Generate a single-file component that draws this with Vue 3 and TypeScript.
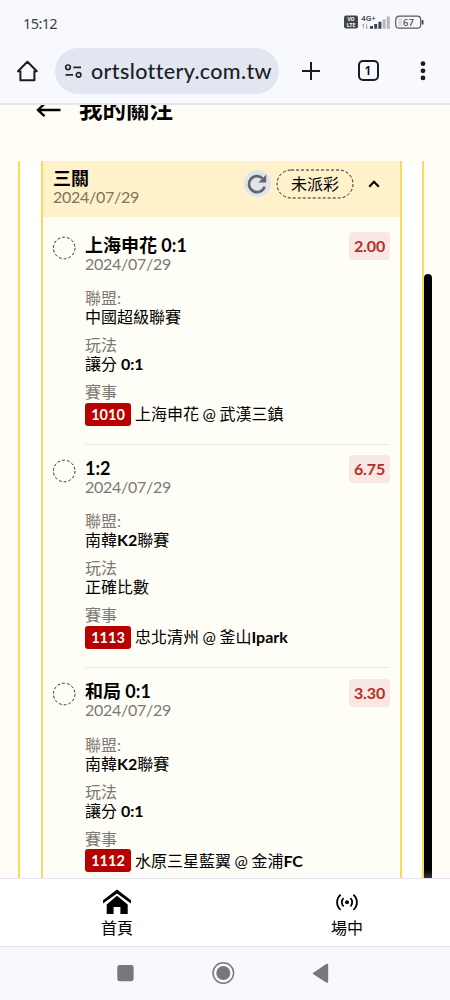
<script setup lang="ts">
interface Leg {
  pick: string
  odds: string
  date: string
  league: string
  market: string
  code: string
  match: string
}

interface Part {
  text: string
  latin: boolean
}

const legs: Leg[] = [
  { pick: '上海申花 0:1', odds: '2.00', date: '2024/07/29', league: '中國超級聯賽', market: '讓分 0:1', code: '1010', match: '上海申花 @ 武漢三鎮' },
  { pick: '1:2', odds: '6.75', date: '2024/07/29', league: '南韓K2聯賽', market: '正確比數', code: '1113', match: '忠北清州 @ 釜山Ipark' },
  { pick: '和局 0:1', odds: '3.30', date: '2024/07/29', league: '南韓K2聯賽', market: '讓分 0:1', code: '1112', match: '水原三星藍翼 @ 金浦FC' },
]

// Latin letters and digits are set heavier than the Chinese text around them.
function parts(value: string): Part[] {
  return (value.match(/[\x20-\x7e]+|[^\x20-\x7e]+/g) ?? []).map((text) => ({
    text,
    latin: /[0-9A-Za-z]/.test(text),
  }))
}
</script>

<template>
  <div class="screen">
    <header class="status">
      <span class="clock">15:12</span>
      <svg class="indicators" width="84" height="18" viewBox="0 0 84 18">
        <rect x="1" y="2.5" width="14" height="13" rx="2" fill="#43454b" />
        <text x="8" y="8.2" class="tiny" text-anchor="middle">VO</text>
        <text x="8" y="14.3" class="tiny" text-anchor="middle">LTE</text>
        <text x="18.2" y="8.2" class="gen">4G+</text>
        <path d="M20.5 15.5v-4.5l-1.5 1.5M23.5 11v4.5l1.5-1.5" fill="none" stroke="#a7a9ae" />
        <g fill="#43454b">
          <rect x="27" y="13" width="3" height="2.8" />
          <rect x="31.2" y="11" width="3" height="4.8" />
          <rect x="35.4" y="8.7" width="3" height="7.1" />
        </g>
        <g fill="#b5b7bd">
          <rect x="39.6" y="6.3" width="3" height="9.5" />
          <rect x="43.8" y="3.5" width="3" height="12.3" />
        </g>
        <rect x="52.7" y="3.2" width="25" height="12" rx="3.5" fill="none" stroke="#55575d" stroke-width="1.2" />
        <path d="M55 5h4.5v8.5h-4.5z" fill="#dfe1e6" />
        <rect x="78.7" y="7" width="1.8" height="4.5" rx=".6" fill="#43454b" />
        <text x="65.4" y="12.6" class="charge" text-anchor="middle">67</text>
      </svg>
    </header>

    <div class="toolbar">
      <svg class="home" width="22" height="22" viewBox="0 0 22 22">
        <path d="M2 11.2h2.4v9.1h14v-9.1h2.4L11.4 1.8z" fill="none" stroke="#1b1c20" stroke-width="2" stroke-linejoin="round" />
      </svg>
      <div class="address">
        <svg width="18" height="14" viewBox="0 0 18 14">
          <g fill="none" stroke="#24262d" stroke-width="1.7">
            <circle cx="4" cy="3.3" r="2.3" />
            <path d="M9.4 3.3h7.6M1.6 10.9h7.4" />
            <circle cx="14.6" cy="10.9" r="2.3" />
          </g>
        </svg>
        <span class="url">ortslottery.com.tw</span>
      </div>
      <svg class="plus" width="20" height="20" viewBox="0 0 20 20">
        <path d="M10 1v18M1 10h18" fill="none" stroke="#1b1c20" stroke-width="2" />
      </svg>
      <span class="tabs">1</span>
      <svg class="more" width="6" height="20" viewBox="0 0 6 20">
        <g fill="#1b1c20">
          <circle cx="3" cy="2.7" r="2.4" />
          <circle cx="3" cy="9.8" r="2.4" />
          <circle cx="3" cy="16.9" r="2.4" />
        </g>
      </svg>
    </div>

    <main class="page">
      <div class="heading">
        <svg width="26" height="18" viewBox="0 0 26 18">
          <path d="M24.5 9H2M8.5 2.8 2 9l6.5 6.2" fill="none" stroke="#000" stroke-width="2.4" />
        </svg>
        <h1>我的關注</h1>
      </div>

      <section class="outer">
        <article class="card">
          <div class="card-head">
            <div class="bet">
              <b>三關</b>
              <span>2024/07/29</span>
            </div>
            <span class="refresh">
              <svg width="20" height="20" viewBox="0 0 20 20">
                <path d="M17.6 12.6A8 8 0 1 1 15.6 4.4" fill="none" stroke="#60646c" stroke-width="2.6" />
                <path d="M19.2.8v7.8h-7.8z" fill="#60646c" />
              </svg>
            </span>
            <span class="state">
              <svg width="78" height="30" viewBox="0 0 78 30">
                <rect x="1" y="1" width="76" height="28" rx="14" fill="none" stroke="#222" stroke-dasharray="3 2" />
              </svg>
              <span>未派彩</span>
            </span>
            <svg class="chevron" width="12" height="8" viewBox="0 0 12 8">
              <path d="M1.2 6.8 6 1.8l4.8 5" fill="none" stroke="#000" stroke-width="2" />
            </svg>
          </div>

          <div v-for="leg in legs" :key="leg.code" class="leg">
            <svg class="mark" width="24" height="24" viewBox="0 0 24 24">
              <circle cx="12.2" cy="12" r="10.8" fill="none" stroke="#333" stroke-dasharray="2.9 1.95" />
            </svg>
            <div class="detail">
              <div class="top">
                <div>
                  <div class="pick">{{ leg.pick }}</div>
                  <div class="date">{{ leg.date }}</div>
                </div>
                <span class="odds">{{ leg.odds }}</span>
              </div>
              <div class="label">聯盟:</div>
              <div class="value"><span v-for="(p, i) in parts(leg.league)" :key="i" :class="{ latin: p.latin }">{{ p.text }}</span></div>
              <div class="label">玩法</div>
              <div class="value"><span v-for="(p, i) in parts(leg.market)" :key="i" :class="{ latin: p.latin }">{{ p.text }}</span></div>
              <div class="label">賽事</div>
              <div class="event">
                <span class="code">{{ leg.code }}</span>
                <span class="match"><span v-for="(p, i) in parts(leg.match)" :key="i" :class="{ latin: p.latin }">{{ p.text }}</span></span>
              </div>
            </div>
          </div>
        </article>
      </section>
      <div class="scrollbar"></div>
    </main>

    <nav class="bottom">
      <div class="item">
        <svg width="28" height="26" viewBox="0 0 28 26">
          <path d="M14 6.8 24.7 15.6V25h-7.3v-7h-6.8v7H3.7V15.6z" />
          <path d="M14 .4 28 11.2v3.2L14 4.4 0 14.4v-3.2z" />
        </svg>
        <span>首頁</span>
      </div>
      <div class="item">
        <svg width="24" height="26" viewBox="0 0 24 26">
          <circle cx="12" cy="13.3" r="2" />
          <g fill="none" stroke="#000" stroke-width="1.8">
            <path d="M8.6 9.2a5.6 5.6 0 0 0 0 8.2M15.4 9.2a5.6 5.6 0 0 1 0 8.2" />
            <path d="M5.6 5.7a10 10 0 0 0 0 15.2M18.4 5.7a10 10 0 0 1 0 15.2" />
          </g>
        </svg>
        <span>場中</span>
      </div>
    </nav>

    <footer class="system">
      <svg width="216" height="24" viewBox="0 0 216 24">
        <g fill="#77787c">
          <rect x=".3" y="4" width="16.3" height="16.3" rx="2.5" />
          <circle cx="106.3" cy="12" r="7" />
          <path d="M196 12.1 209.2 3q2-1 2 1v16.4q0 2-2 1L196 12.9q-.8-.4 0-.8z" />
        </g>
        <circle cx="106.3" cy="12" r="10.3" fill="none" stroke="#77787c" stroke-width="1.5" />
      </svg>
    </footer>
  </div>
</template>

<style>
body {
  margin: 0;
}
</style>

<style scoped>
.screen {
  display: flex;
  flex-direction: column;
  width: 450px;
  height: 1000px;
  overflow: hidden;
  background: #f8f9fe;
  color: #000;
  font-family: Lato, "Noto Sans CJK TC", sans-serif;
  font-size: 16px;
}
svg {
  display: block;
  flex: none;
}
.status {
  display: flex;
  justify-content: space-between;
  align-items: center;
  box-sizing: border-box;
  height: 40px;
  padding: 5px 23px 0 23px;
}
.clock {
  color: #3f4147;
  font: 400 14.5px/20px "Noto Sans", sans-serif;
  letter-spacing: -0.6px;
}
.indicators {
  margin-top: -1px;
}
.tiny {
  fill: #fff;
  font: 700 5px "Noto Sans", sans-serif;
}
.gen {
  fill: #43454b;
  font: 600 7.8px "Noto Sans", sans-serif;
}
.charge {
  fill: #43454b;
  font: 500 9.5px "Noto Sans", sans-serif;
}
.toolbar {
  display: flex;
  align-items: center;
  box-sizing: border-box;
  height: 65px;
  padding: 0 24px 2px 16px;
  border-bottom: 2px solid #e6e7eb;
}
.address {
  display: flex;
  align-items: center;
  gap: 9px;
  box-sizing: border-box;
  width: 225.5px;
  height: 46px;
  margin-left: 17px;
  padding-left: 9px;
  border-radius: 23px;
  background: #e1e6f1;
}
.url {
  color: #1c1d24;
  font-size: 21.5px;
  font-weight: 500;
  letter-spacing: 0.35px;
  line-height: 28px;
  white-space: nowrap;
}
.plus {
  margin-left: 20px;
}
.address + .plus {
  margin-left: 20.5px;
  padding-left: 1px;
}
.tabs {
  box-sizing: border-box;
  width: 21px;
  height: 21px;
  margin-left: 37px;
  border: 2px solid #1b1c20;
  border-radius: 5px;
  font: 600 12px/17px "Noto Sans", sans-serif;
  text-align: center;
}
.more {
  margin-left: 41.5px;
}
.page {
  position: relative;
  height: 773px;
  overflow: hidden;
  background: #fffdf5;
}
.heading {
  display: flex;
  align-items: center;
  gap: 17px;
  height: 32px;
  margin-top: -12px;
  padding-left: 36px;
}
.heading svg {
  margin-top: 1px;
}
h1 {
  margin: 0;
  font-size: 23.5px;
  font-weight: 700;
  line-height: 32px;
}
.outer {
  box-sizing: border-box;
  width: 406px;
  margin: 36px 0 0 18px;
  padding: 0 20px 0 21px;
  border: solid #fcd95a;
  border-width: 0 2px;
  background: #fff;
}
.card {
  border: solid #fcd95a;
  border-width: 0 2px;
  background: #fffef6;
}
.card-head {
  display: flex;
  align-items: flex-start;
  box-sizing: border-box;
  height: 56px;
  padding: 8px 20px 0 10px;
  background: #fff1c9;
}
.bet {
  flex: 1;
  display: flex;
  flex-direction: column;
}
.bet b {
  font-size: 18px;
  line-height: 19px;
}
.bet span {
  margin-top: -1px;
  color: #7c755f;
  letter-spacing: -0.27px;
  line-height: 19px;
}
.refresh {
  display: grid;
  place-items: center;
  width: 27px;
  height: 27px;
  margin: 1px 5px 0 0;
  border-radius: 50%;
  background: #e1e3ea;
}
.state {
  display: grid;
  place-items: center;
  height: 30px;
}
.state > * {
  grid-area: 1 / 1;
}
.state span {
  margin: -2px 0 0 1px;
}
.chevron {
  margin: 11px 0 0 14.5px;
}
.leg {
  display: flex;
  box-sizing: border-box;
  height: 223.3px;
  padding: 13px 12px 0 9px;
}
.card-head + .leg {
  margin-top: 4.5px;
}
.mark {
  margin-top: 1px;
}
.detail {
  flex: 1;
  height: 209.3px;
  margin-left: 9px;
  border-bottom: 1.5px solid #e9e7e2;
}
.leg:last-child .detail {
  border: 0;
}
.top {
  display: flex;
  justify-content: space-between;
  height: 39px;
  margin: 0 -2px 14.5px 0;
}
.pick {
  font-size: 18px;
  font-weight: 700;
  line-height: 20px;
}
.date,
.label {
  color: #7a7974;
  line-height: 19px;
}
.date {
  margin-top: -1px;
  letter-spacing: -0.27px;
}
.odds {
  width: 41px;
  height: 28px;
  margin-top: -2.5px;
  border-radius: 4px;
  background: #f9e7e1;
  color: #b62d2b;
  font-weight: 700;
  letter-spacing: -0.1px;
  line-height: 28px;
  text-align: center;
}
.value {
  margin-bottom: 9px;
  line-height: 19px;
}
.value span,
.match span {
  white-space: pre;
}
.latin {
  font-weight: 700;
}
.event {
  display: flex;
  gap: 4px;
  margin-top: 1.7px;
  line-height: 23px;
}
.match {
  margin-top: -0.7px;
  word-spacing: -0.6px;
}
.code {
  width: 46px;
  height: 23px;
  border-radius: 3px;
  background: #b80000;
  color: #fff;
  font-size: 14.5px;
  font-weight: 700;
  text-align: center;
}
.scrollbar {
  position: absolute;
  top: 169px;
  left: 424px;
  width: 8px;
  height: 604px;
  border-radius: 4px 4px 0 0;
  background: linear-gradient(#000 595px, #333);
}
.bottom {
  display: grid;
  grid-template-columns: 230px 230px;
  box-sizing: border-box;
  height: 69px;
  padding-left: 2px;
  border: solid #e3e4ea;
  border-width: 1px 0;
  background: #fff;
}
.item {
  display: flex;
  flex-direction: column;
  align-items: center;
  gap: 3px;
  padding-top: 10px;
  line-height: 20px;
}
.system {
  padding: 14px 0 0 117px;
}
</style>
